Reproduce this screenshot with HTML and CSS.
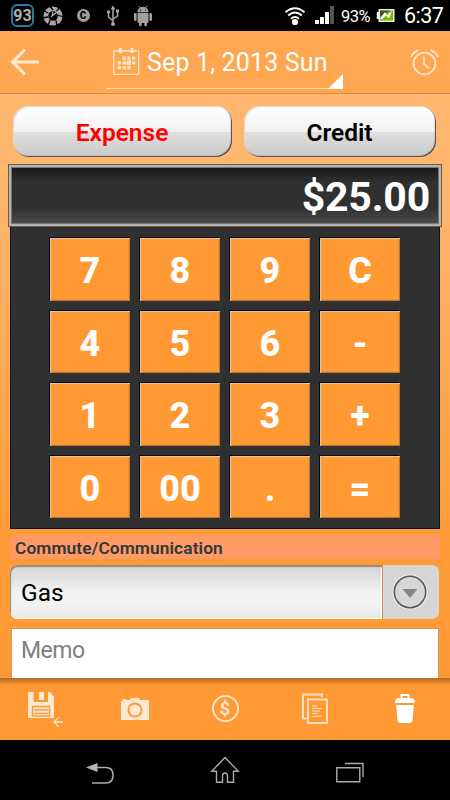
FILE: index.html
```html
<!DOCTYPE html>
<html lang="en">
<head>
<meta charset="utf-8">
<title>Expense entry</title>
<link rel="stylesheet" href="styles.css">
</head>
<body>
<div class="status">
  <div class="notices">
    <span class="level">93</span>
    <svg width="30" height="24" viewBox="0 0 30 24"><circle cx="15" cy="12" r="7.200" fill="none" stroke="#a8a8a8" stroke-width="4.800"/><path d="M11 1l4 5M22 3l-4 5M26 13l-7-2M19 23l-1-7M10 22l2-6M4 14l6-1M5 6l5 3" stroke="#000" stroke-width="1.300"/><path d="M20 7l-6 5 1-4" stroke="#b5b5b5" stroke-width="1.200" fill="none"/></svg>
    <span class="cell"><span class="coin">C</span></span>
    <svg width="30" height="24" viewBox="0 0 30 24"><g fill="none" stroke="#a8a8a8" stroke-width="1.500"><path d="M15 4v15M10.500 9v4l4.500 4M19.500 8v4l-4.500 3"/></g><g fill="#a8a8a8"><path d="M15 1.500l2.500 4h-5z"/><circle cx="15" cy="20" r="2"/><circle cx="10.500" cy="8" r="1.700"/><path d="M18 5.500h3v3h-3z"/></g></svg>
    <svg width="30" height="24" viewBox="0 0 30 24"><g fill="#a0a0a0"><path d="M9.500 8.200a5.500 5.500 0 0 1 11 0z"/><path d="M9.500 9h11v9a1 1 0 0 1-1 1h-9a1 1 0 0 1-1-1z"/><rect x="6" y="9" width="2.600" height="8" rx="1.300"/><rect x="21.400" y="9" width="2.600" height="8" rx="1.300"/><rect x="11" y="17" width="2.700" height="5.300" rx="1.200"/><rect x="16.300" y="17" width="2.700" height="5.300" rx="1.200"/></g><path d="M11 2l2 3M19 2l-2 3" stroke="#a0a0a0"/><path d="M12 5.500h1v1h-1zM17 5.500h1v1h-1z"/></svg>
  </div>
  <div class="system">
    <svg width="22" height="20" viewBox="0 0 22 20"><g fill="none" stroke="#fff" stroke-width="1.900"><path d="M1.500 6.200q9.500-8 19 0M4.200 9.500q6.800-6 13.600 0M7 12.700q4-3.300 8 0"/></g><circle cx="11" cy="16" r="3.100" fill="#fff"/></svg>
    <svg class="signal" width="20" height="19" viewBox="0 0 20 19"><path d="M0 14h4v4H0zM5 11h4v7H5zM10 6h4v12h-4z" fill="#fff"/><path d="M15 0h4v18h-4z" fill="#555"/></svg>
    <span class="percent">93%</span>
    <svg class="battery" width="19" height="15" viewBox="0 0 19 15"><path d="M2.500 1h16v13h-16v-3H.8V4h1.700z" fill="#eee"/><path d="M4 2.500h13v10H4z" fill="#76b900"/><path d="M4 2.500h10L4 9z" fill="#3a5515"/><path d="M4 10.500l5-6.500 2 3 5-4-3 7.500-3-3-4 4z" fill="#fff"/></svg>
    <span class="clock">6:37</span>
  </div>
</div>
<header class="header">
  <svg width="28" height="28" viewBox="0 0 28 28"><path d="M28 14H2M14 1.500L1.700 14 14 26.500" fill="none" stroke="#ffead6" stroke-width="3"/></svg>
  <div class="date">
    <svg width="28" height="28" viewBox="0 0 28 28"><g fill="none" stroke="#ffe4c9" stroke-width="1.300"><path d="M1.700 2.800h25v23.500h-25z"/></g><g fill="#ffe4c9"><path d="M7 0h3v5H7zM18.500 0h3v5h-3zM6 2h17v1.500H6z"/><path d="M10.500 8.500h3.300v3.300h-3.300zM15.200 8.500h3.300v3.300h-3.300zM20 8.500h3.300v3.300H20zM5.700 13.300H9v3.300H5.700zM10.500 13.300h3.300v3.300h-3.300zM14.500 12.500H19V17h-4.500zM20 13.300h3.300v3.300H20zM5.700 18H9v3.300H5.700zM10.500 18h3.300v3.300h-3.300zM15.200 18h3.300v3.300h-3.300z"/></g></svg>
    <span>Sep 1, 2013 Sun</span>
    <svg class="corner" width="15" height="15" viewBox="0 0 15 15"><path d="M15 0v15H0z" fill="#fff"/></svg>
  </div>
  <svg width="30" height="27" viewBox="0 0 30 27"><g fill="none" stroke="#ffe4c9" stroke-width="1.800"><circle cx="15.500" cy="14.500" r="10.900"/><path d="M15 7.500v7.500l5 4.500M1.800 8Q4.500 3 9.500.9M29.200 8Q26.500 3 21.500.9"/></g></svg>
</header>
<main class="main">
  <div class="types">
    <button class="type active"><span>Expense</span></button>
    <button class="type"><span>Credit</span></button>
  </div>
  <div class="display"><span>$25.00</span></div>
  <div class="pad">
    <button>7</button><button>8</button><button>9</button><button>C</button>
    <button>4</button><button>5</button><button>6</button><button>-</button>
    <button>1</button><button>2</button><button>3</button><button>+</button>
    <button>0</button><button>00</button><button>.</button><button>=</button>
  </div>
  <div class="category">Commute/Communication</div>
  <div class="select">
    <div class="value">Gas</div>
    <div class="arrow"><svg width="36" height="36" viewBox="0 0 36 36"><circle cx="18" cy="18" r="17" fill="none" stroke="#ececec" stroke-width="1.500"/><circle cx="18" cy="18" r="15.700" fill="#d5d6d5" stroke="#555" stroke-width="1.500"/><path d="M10.500 15h15l-7.500 9z" fill="#858585"/></svg></div>
  </div>
  <div class="memo">Memo</div>
</main>
<footer class="tools">
  <svg width="90" height="62" viewBox="0 0 90 62"><path d="M28 14h22l4 5v21H28z" fill="#ffe8d2"/><path d="M33.500 14v10H48V14" fill="#f93"/><path d="M39 14h5v8h-5z" fill="#ffe8d2"/><path d="M32.500 28.500h17V38h-17z" fill="none" stroke="#f93" stroke-width="1.500"/><path d="M34 32h14M34 35.300h14" stroke="#f93" stroke-width="1.300"/><path d="M63 44H54M58.500 39.500L54 44l4.500 4.500" fill="none" stroke="#ffe8d2" stroke-width="1.300"/></svg>
  <svg width="90" height="62" viewBox="0 0 90 62"><path d="M31 42V23h1.500v-2H36v1h4l1-2h8l1 2h9v20z" fill="#ffe8d2"/><circle cx="45" cy="32" r="6.600" fill="#ffe8d2" stroke="#f93" stroke-width="2"/></svg>
  <span class="dollar-cell"><span class="dollar">$</span></span>
  <svg width="90" height="62" viewBox="0 0 90 62"><g fill="none" stroke="#ffe1c4" stroke-width="2"><path d="M36.500 40.500H33v-24h19V19"/><path d="M38 21.500h19v23.500H38z"/></g><path d="M42 28h6M42 30.500h10M42 33h8M42 35.500h6M42 38.200h10" stroke="#ffe1c4" stroke-width="1.100"/></svg>
  <svg width="90" height="62" viewBox="0 0 90 62"><path d="M41.500 21v-4h7v4" fill="none" stroke="#fff" stroke-width="2"/><path d="M35 25q0-5 4-5h12q4 0 4 5zM36.200 27h17.600l-1.200 15q-.3 3-3 3h-9.200q-2.700 0-3-3z" fill="#fff"/></svg>
</footer>
<nav class="nav">
  <svg width="28" height="22" viewBox="0 0 28 22"><path d="M0 5.500L11.500 1v9z" fill="#b5b5b5"/><path d="M11 5.500h9q7 0 7 7.700 0 7.700-7 7.700H6" fill="none" stroke="#aaa" stroke-width="1.500"/></svg>
  <svg class="home" width="30" height="28" viewBox="0 0 30 28"><path d="M15 1.500L28.300 15.300H23.500V26.300H17.500V20q0-3-2.500-3t-2.500 3V26.300H6.500V15.300H1.700z" fill="none" stroke="#aaa" stroke-width="1.400"/></svg>
  <svg width="28" height="21" viewBox="0 0 28 21"><path d="M.8 5.700h23v14H.8zM9 1.500h18V15" fill="none" stroke="#aaa" stroke-width="1.400"/></svg>
</nav>
</body>
</html>
```

FILE: styles.css
```css
* { box-sizing: border-box; }
body {
  margin: 0;
  width: 450px;
  height: 800px;
  display: flex;
  flex-direction: column;
  overflow: hidden;
  background: #000;
  font-family: Roboto, "Liberation Sans", sans-serif;
}
svg { display: block; flex: none; }
button { border: 0; padding: 0; font-family: inherit; }

.status {
  height: 31px;
  display: flex;
  justify-content: space-between;
  padding: 0 8px 0 11px;
  color: #fff;
}
.notices { display: flex; align-items: center; }
.level {
  width: 23px;
  height: 23px;
  margin-right: 4px;
  border: 2px solid #247aa0;
  border-radius: 6px;
  color: #b0b0b0;
  font-size: 16px;
  font-weight: 700;
  line-height: 20px;
  text-align: center;
}
.cell { width: 30px; display: flex; justify-content: center; }
.coin {
  width: 13px;
  height: 13px;
  border-radius: 50%;
  background: #a0a0a0;
  color: #000;
  font-size: 10px;
  font-weight: 900;
  line-height: 13px;
  text-align: center;
}
.system { display: flex; align-items: center; }
.signal { margin-left: 9px; }
.percent {
  width: 31px;
  margin-left: 6px;
  padding-top: 2px;
  font-size: 16.500px;
  letter-spacing: -0.500px;
  white-space: nowrap;
}
.battery { margin-left: 4px; }
.clock { width: 38px; margin-left: 9px; font-size: 21.500px; letter-spacing: -0.500px; line-height: 33px; }

.header {
  height: 63px;
  display: flex;
  align-items: center;
  padding: 0 11px;
  background: #ffa750;
  border-bottom: 1px solid #d98d43;
}
.date {
  width: 237px;
  height: 53px;
  margin: 0 66px 0 67px;
  display: flex;
  align-items: center;
  gap: 7px;
  padding: 1px 0 0 6px;
  border-bottom: 1px solid #ffe0bf;
  color: #fff;
  font-size: 25px;
  letter-spacing: 0.150px;
  white-space: nowrap;
}
.date .corner { align-self: flex-end; margin: 0 0 -1px -7px; }
.header > svg:last-child { margin-left: auto; }

.main {
  height: 584px;
  padding: 12px 8px 0;
  overflow: hidden;
  background: linear-gradient(#ffb770 0, #ffb46a 22%, #ff9c38 75%, #f93 100%);
}
.types {
  display: grid;
  grid-template-columns: 219px 192px;
  gap: 12px;
  padding-left: 5px;
}
.type {
  height: 51px;
  border-radius: 16px;
  background: linear-gradient(#fff 0, #f1f1f1 50%, #e0e0e0 51%, #c8c8c8 100%);
  box-shadow: inset 1px 1px 1px #e2d7cd, inset -1px -1px 1px #444;
  color: #000;
  font-size: 24.500px;
  font-weight: 600;
}
.type.active { color: #f00; }
.type span { display: block; margin: 2px 1px 0 0; }
.display {
  height: 63px;
  margin-top: 7px;
  padding-right: 9px;
  border: 1px solid #715b49;
  box-shadow: inset 0 0 0 2px #b4b4b4, inset 0 0 0 3px #777;
  background: linear-gradient(#1a1a1a 3px, #303030 17px, #303030 42px, #4c4c4c 59px);
  color: #fff;
  font-size: 41px;
  font-weight: 700;
  letter-spacing: -0.200px;
  line-height: 65px;
  text-align: right;
}
.display span { display: inline-block; padding-right: 2px; }
.pad {
  width: 430px;
  height: 302px;
  margin-left: 2px;
  padding: 11px 39px 0;
  display: grid;
  grid-template-columns: repeat(4, 80px);
  grid-auto-rows: 62.500px;
  gap: 10px;
  border: solid #02142b;
  border-width: 0 1px 1px;
  background: #303030;
}
.pad button {
  padding-top: 4px;
  background: #f93;
  box-shadow: inset 1px 1px 1px #e8c5a0, inset -1px -1px 1px #b47437, -1px -1px 0 #05091c;
  color: #fff;
  font-size: 36px;
  font-weight: 800;
  line-height: 58px;
}
.category {
  width: 430px;
  height: 24px;
  margin: 6px 0 0 2px;
  padding-left: 5px;
  background: #ff9966;
  color: #303838;
  font-size: 17.300px;
  font-weight: 600;
  letter-spacing: 0.120px;
  line-height: 26px;
}
.select {
  width: 429px;
  height: 54px;
  margin: 6px 0 0 2px;
  display: flex;
  border-radius: 7px;
  overflow: hidden;
}
.value {
  width: 372px;
  padding-left: 11px;
  border-radius: 7px 0 0 7px;
  background: linear-gradient(#d4d4d4, #f3f3f3 55%, #f3f3f3 72%, #e8e8e8);
  box-shadow: inset 1px 2px 1px #92887d, inset -1px -1px 1px #fff;
  font-size: 24.500px;
  line-height: 55px;
}
.arrow {
  flex: 1;
  display: flex;
  align-items: center;
  justify-content: center;
  border-left: 1px solid #d08958;
  padding-right: 2px;
  background: #d5d6d5;
}
.memo {
  width: 428px;
  height: 52px;
  margin: 9px 0 0 3px;
  padding-left: 9px;
  border: 1px solid #c79a70;
  background: #fff;
  color: #7f7f7f;
  font-size: 23px;
  letter-spacing: -0.500px;
  line-height: 43px;
}

.tools {
  height: 62px;
  display: flex;
  background: linear-gradient(#ab6a2c, #d67e28 3px, #f93 7px);
}
.dollar-cell { width: 90px; padding-bottom: 1px; display: flex; align-items: center; justify-content: center; }
.dollar {
  width: 27px;
  height: 27px;
  border: 2px solid #ffe5cc;
  border-radius: 50%;
  color: #ffe5cc;
  font-size: 19px;
  font-weight: 700;
  line-height: 24px;
  text-align: center;
}
.nav {
  height: 60px;
  display: flex;
  align-items: center;
  justify-content: space-between;
  padding: 5px 86px 0;
}
.home { margin-bottom: 5px; }
```
